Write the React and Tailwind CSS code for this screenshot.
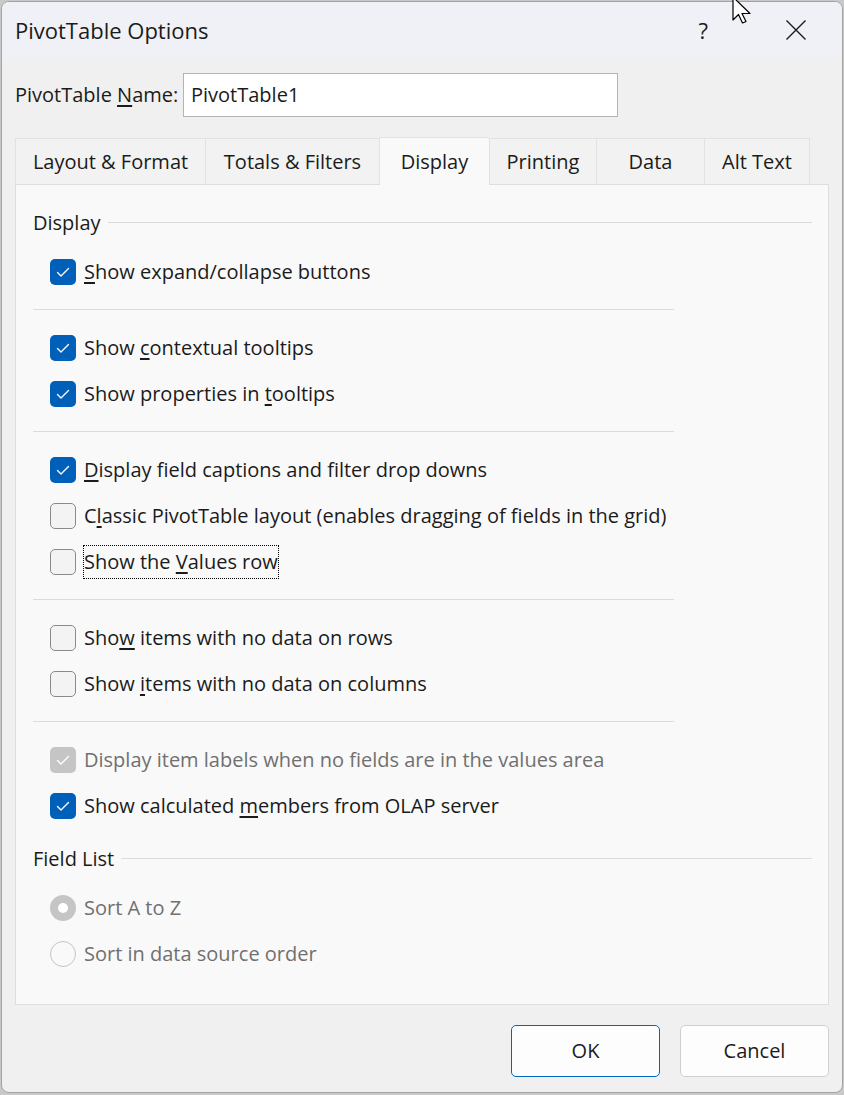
import React from "react";

function Box({ state }) {
  if (state === "off") {
    return (
      <span className="w-[26px] h-[26px] shrink-0 rounded-[5px] border border-[#8a8a8a] bg-[#f3f3f3]" />
    );
  }
  const bg = state === "dis" ? "bg-[#c5c5c5]" : "bg-[#005fb8]";
  return (
    <span className={`w-[26px] h-[26px] shrink-0 rounded-[5px] ${bg} flex items-center justify-center`}>
      <svg width="26" height="26" viewBox="0 0 26 26">
        <path d="M7.5 13.5 L11 17 L18.5 9.5" fill="none" stroke="#fff" strokeWidth="1.4" strokeLinecap="round" strokeLinejoin="round" />
      </svg>
    </span>
  );
}

function Row({ state, children, dim }) {
  return (
    <div className="flex items-center h-[46px] pl-[17px] gap-[8px]">
      <Box state={state} />
      <span className={dim ? "text-[#707070]" : "text-[#1b1b1b]"}>{children}</span>
    </div>
  );
}

function Radio({ on, children }) {
  return (
    <div className="flex items-center h-[46px] pl-[17px] gap-[8px]">
      {on ? (
        <span className="w-[26px] h-[26px] shrink-0 rounded-full bg-[#c5c5c5] flex items-center justify-center">
          <span className="w-[10px] h-[10px] rounded-full bg-white" />
        </span>
      ) : (
        <span className="w-[26px] h-[26px] shrink-0 rounded-full border border-[#c5c5c5] bg-[#f9f9f9]" />
      )}
      <span className="text-[#707070]">{children}</span>
    </div>
  );
}

const U = ({ children }) => (
  <span className="underline decoration-[1.5px] underline-offset-[3px]">{children}</span>
);

function Sep() {
  return <div className="w-[641px] h-px bg-[#dcdcdc] mt-[14px] mb-[15px]" />;
}

function Header({ children }) {
  return (
    <div className="flex items-center h-[28px] gap-[7px]">
      <span className="text-[#1b1b1b]">{children}</span>
      <div className="flex-1 h-px bg-[#dcdcdc] -mt-[2px]" />
    </div>
  );
}

const tabs = [
  ["Layout & Format", "w-[190px]"],
  ["Totals & Filters", "w-[174px]"],
  ["Display", "w-[110px]"],
  ["Printing", "w-[107px]"],
  ["Data", "w-[108px]"],
  ["Alt Text", "w-[106px]"],
];

export default function App() {
  return (
    <div className="relative w-[844px] h-[1095px] bg-[#c9c9c9] overflow-hidden font-['Segoe_UI','Open_Sans',sans-serif] text-[20px] leading-none">
      <div className="ml-px mt-px w-[842px] h-[1092px] rounded-[8px] border border-[#a3a3a3] bg-[#f0f0f0] overflow-hidden flex flex-col">
        {/* title bar */}
        <div className="h-[56px] bg-[#eff1f6] flex items-center pl-[13px]">
          <span className="text-[22px] text-[#1b1b1b]">PivotTable Options</span>
          <span className="ml-auto text-[22px] text-[#1b1b1b] mr-[77px]">?</span>
          <svg width="22" height="22" viewBox="0 0 22 22" className="mr-[35px]">
            <path d="M1.5 1.5 L20.5 20.5 M20.5 1.5 L1.5 20.5" stroke="#1b1b1b" strokeWidth="1.4" />
          </svg>
        </div>
        {/* body */}
        <div className="px-[13px] pt-[15px] flex flex-col">
          <div className="flex items-center h-[44px]">
            <span className="text-[#1b1b1b] w-[168px] whitespace-nowrap">
              PivotTable <U>N</U>ame:
            </span>
            <div className="w-[435px] h-[44px] bg-white border border-[#b4b4b4] flex items-center pl-[7px] text-[#1b1b1b]">
              PivotTable1
            </div>
          </div>
          {/* tabs */}
          <div className="flex items-end mt-[20px] relative z-10">
            {tabs.map(([t, w], i) => {
              const active = t === "Display";
              return (
                <div
                  key={t}
                  className={`${w} ${active ? "h-[48px] bg-[#f9f9f9] -mb-px" : "h-[46px] bg-[#f2f2f2]"} border-t border-l border-[#e2e2e2] ${i === tabs.length - 1 ? "border-r" : ""} flex items-center justify-center text-[#1b1b1b] whitespace-nowrap`}
                >
                  {t}
                </div>
              );
            })}
          </div>
          {/* panel */}
          <div className="bg-[#f9f9f9] border border-[#dedede] pl-[17px] pr-[16px] pt-[24px] pb-[27px] flex flex-col">
            <Header>Display</Header>
            <div className="mt-[12px]" />
            <Row state="on">
              <U>S</U>how expand/collapse buttons
            </Row>
            <Sep />
            <Row state="on">
              Show <U>c</U>ontextual tooltips
            </Row>
            <Row state="on">
              Show properties in <U>t</U>ooltips
            </Row>
            <Sep />
            <Row state="on">
              <U>D</U>isplay field captions and filter drop downs
            </Row>
            <Row state="off">
              C<U>l</U>assic PivotTable layout (enables dragging of fields in the grid)
            </Row>
            <Row state="off">
              <span className="outline-1 outline-dotted outline-black inline-block leading-[32px] h-[32px]">
                Show the <U>V</U>alues row
              </span>
            </Row>
            <Sep />
            <Row state="off">
              Sho<U>w</U> items with no data on rows
            </Row>
            <Row state="off">
              Show <U>i</U>tems with no data on columns
            </Row>
            <Sep />
            <Row state="dis" dim>
              Display item labels when no fields are in the values area
            </Row>
            <Row state="on">
              Show calculated <U>m</U>embers from OLAP server
            </Row>
            <div className="mt-[16px]" />
            <Header>Field List</Header>
            <div className="mt-[12px]" />
            <Radio on>Sort A to Z</Radio>
            <Radio>Sort in data source order</Radio>
          </div>
          {/* buttons */}
          <div className="flex justify-end gap-[20px] mt-[20px]">
            <button className="w-[149px] h-[52px] rounded-[5px] border border-[#0067c0] bg-[#fdfdfd] text-[#1b1b1b]">
              OK
            </button>
            <button className="w-[149px] h-[52px] rounded-[5px] border border-[#d0d0d0] bg-[#fdfdfd] text-[#1b1b1b]">
              Cancel
            </button>
          </div>
        </div>
      </div>
      {/* mouse cursor */}
      <svg className="absolute left-[731px] -top-[4px]" width="28" height="32" viewBox="0 0 28 32">
        <path d="M2 1 L2 24 L7.5 18.5 L11.5 27 L15 25.5 L11 17.5 L19 17.5 Z" fill="#fff" stroke="#000" strokeWidth="1.2" strokeLinejoin="round" />
      </svg>
    </div>
  );
}
